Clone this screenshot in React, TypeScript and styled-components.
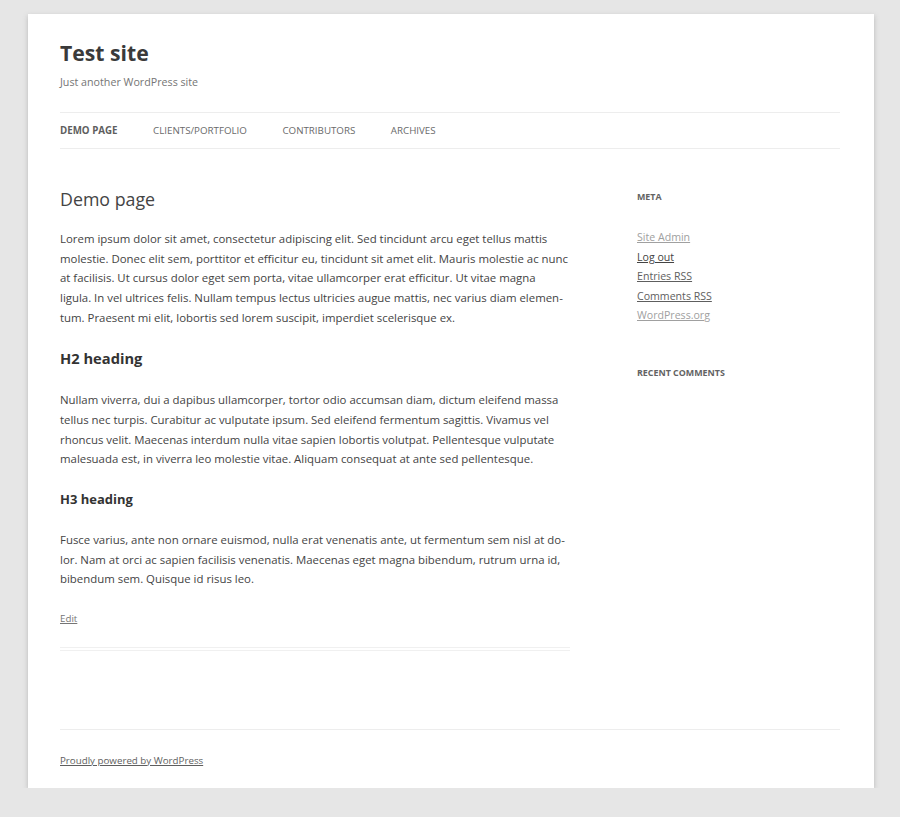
import * as React from 'react';
import styled, { createGlobalStyle } from 'styled-components';

const GlobalStyle = createGlobalStyle`
  html, body {
    margin: 0;
    padding: 0;
    background: #e6e6e6;
  }
  body {
    font-family: "Open Sans", "Liberation Sans", sans-serif;
    color: #444;
  }
`;

const Page = styled.div`
  width: 846px;
  margin: 14px 0 0 28px;
  padding: 0 34px 17px 32px;
  box-sizing: border-box;
  background: #fff;
  box-shadow: 0 2px 5px rgba(100, 100, 100, 0.35);
`;

const Masthead = styled.header`
  padding-top: 23px;
`;

const SiteTitle = styled.h1`
  margin: 0;
  font-size: 21.2px;
  font-weight: 700;
  line-height: 32px;
  color: #3a3a3a;
`;

const Tagline = styled.p`
  margin: 3px 0 0;
  font-size: 10.7px;
  line-height: 20px;
  color: #757575;
`;

const Nav = styled.nav`
  margin-top: 20px;
  border-top: 1px solid #ededed;
  border-bottom: 1px solid #ededed;
  height: 35px;
  display: flex;
  align-items: center;
`;

const NavItem = styled.a<{ $current?: boolean }>`
  font-size: 9.75px;
  text-transform: uppercase;
  text-decoration: none;
  margin-right: 35.5px;
  color: ${(p) => (p.$current ? '#5e5e5e' : '#6a6a6a')};
  font-weight: ${(p) => (p.$current ? 700 : 400)};
`;

const Main = styled.div`
  display: flex;
  justify-content: space-between;
  padding-top: 37px;
`;

const Content = styled.article`
  width: 510px;
`;

const EntryTitle = styled.h1`
  margin: 0;
  font-size: 17.8px;
  font-weight: 400;
  line-height: 26px;
  color: #444;
`;

const Body = styled.div`
  margin-top: 17px;
  border-bottom: 4px double #f0f0f0;
  padding-bottom: 18px;
`;

const Para = styled.p`
  margin: 0 0 20px;
  padding-right: 0.5px;
  font-size: 11.42px;
  line-height: 19.65px;
  color: #444;
`;

const Heading = styled.h2<{ $size: number; $lead: number; $after: number }>`
  margin: 0 0 ${(p) => p.$after}px;
  font-size: ${(p) => p.$size}px;
  font-weight: 700;
  line-height: ${(p) => p.$lead}px;
  color: #333;
`;

const EditRow = styled.div`
  font-size: 9.75px;
  line-height: 20px;
`;

const EditLink = styled.a`
  color: #757575;
  text-decoration: underline;
`;

const Sidebar = styled.aside`
  width: 203px;
  padding-top: 3px;
`;

const WidgetTitle = styled.h3`
  margin: 0 0 23px;
  font-size: 8.9px;
  font-weight: 700;
  text-transform: uppercase;
  line-height: 16px;
  color: #636363;
`;

const LinkList = styled.ul`
  list-style: none;
  margin: 0 0 39px;
  padding: 0;
`;

const LinkItem = styled.li`
  font-size: 10.6px;
  line-height: 19.6px;
`;

const SideLink = styled.a<{ $visited?: boolean; $dark?: boolean }>`
  color: ${(p) => (p.$visited ? '#a0a0a0' : p.$dark ? '#444' : '#5e5e5e')};
  text-decoration: underline;
`;

const Footer = styled.footer`
  margin-top: 78px;
  border-top: 1px solid #ededed;
  padding-top: 21px;
  font-size: 9.75px;
  line-height: 20px;
`;

const FooterLink = styled.a`
  color: #5e5e5e;
  text-decoration: underline;
`;

const navItems = ['Demo page', 'Clients/Portfolio', 'Contributors', 'Archives'];

const metaLinks = [
  { label: 'Site Admin', visited: true },
  { label: 'Log out', dark: true },
  { label: 'Entries RSS' },
  { label: 'Comments RSS' },
  { label: 'WordPress.org', visited: true },
];

export default function App() {
  return (
    <>
      <GlobalStyle />
      <Page>
        <Masthead>
          <SiteTitle>Test site</SiteTitle>
          <Tagline>Just another WordPress site</Tagline>
          <Nav>
            {navItems.map((item, i) => (
              <NavItem key={item} $current={i === 0}>
                {item}
              </NavItem>
            ))}
          </Nav>
        </Masthead>
        <Main>
          <Content>
            <EntryTitle>Demo page</EntryTitle>
            <Body>
              <Para>
                Lorem ipsum dolor sit amet, consectetur adipiscing elit. Sed tincidunt arcu eget tellus mattis
                molestie. Donec elit sem, porttitor et efficitur eu, tincidunt sit amet elit. Mauris molestie ac nunc
                at facilisis. Ut cursus dolor eget sem porta, vitae ullamcorper erat efficitur. Ut vitae magna
                ligula. In vel ultrices felis. Nullam tempus lectus ultricies augue mattis, nec varius diam elemen&shy;tum.
                Praesent mi elit, lobortis sed lorem suscipit, imperdiet scelerisque ex.
              </Para>
              <Heading as="h2" $size={14.7} $lead={22} $after={21}>
                H2 heading
              </Heading>
              <Para>
                Nullam viverra, dui a dapibus ullamcorper, tortor odio accumsan diam, dictum eleifend massa
                tellus nec turpis. Curabitur ac vulputate ipsum. Sed eleifend fermentum sagittis. Vivamus vel
                rhoncus velit. Maecenas interdum nulla vitae sapien lobortis volutpat. Pellentesque vulputate
                malesuada est, in viverra leo molestie vitae. Aliquam consequat at ante sed pellentesque.
              </Para>
              <Heading as="h3" $size={13} $lead={20} $after={21}>
                H3 heading
              </Heading>
              <Para>
                Fusce varius, ante non ornare euismod, nulla erat venenatis ante, ut fermentum sem nisl at do&shy;lor.
                Nam at orci ac sapien facilisis venenatis. Maecenas eget magna bibendum, rutrum urna id,
                bibendum sem. Quisque id risus leo.
              </Para>
              <EditRow>
                <EditLink>Edit</EditLink>
              </EditRow>
            </Body>
          </Content>
          <Sidebar>
            <WidgetTitle>Meta</WidgetTitle>
            <LinkList>
              {metaLinks.map((l) => (
                <LinkItem key={l.label}>
                  <SideLink $visited={l.visited} $dark={l.dark}>
                    {l.label}
                  </SideLink>
                </LinkItem>
              ))}
            </LinkList>
            <WidgetTitle>Recent Comments</WidgetTitle>
          </Sidebar>
        </Main>
        <Footer>
          <FooterLink>Proudly powered by WordPress</FooterLink>
        </Footer>
      </Page>
    </>
  );
}
